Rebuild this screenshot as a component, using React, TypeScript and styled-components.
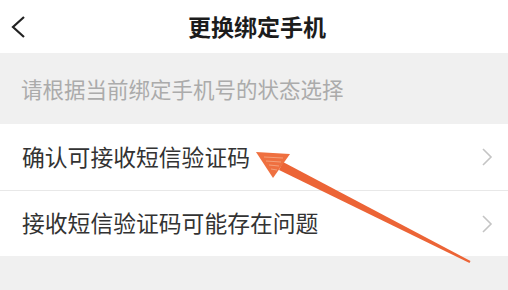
import React from "react";
import styled, { createGlobalStyle } from "styled-components";

const Global = createGlobalStyle`
  html, body { margin: 0; padding: 0; }
  body {
    width: 508px;
    height: 290px;
    overflow: hidden;
    background: #f0f0f0;
    font-family: "Noto Sans CJK SC", "Noto Sans", sans-serif;
  }
`;

const Page = styled.div`
  position: relative;
  width: 508px;
  height: 290px;
  display: flex;
  flex-direction: column;
  background: #f0f0f0;
`;

const Header = styled.header`
  height: 53px;
  background: #ffffff;
  display: grid;
  grid-template-columns: 1fr auto 1fr;
  align-items: center;
`;

const BackButton = styled.div`
  display: flex;
  align-items: center;
  padding-left: 11px;
  height: 100%;
`;

const Title = styled.h1`
  margin: 0;
  font-size: 23px;
  font-weight: 700;
  color: #1c1c1c;
  line-height: 1;
  padding-left: 6px;
`;

const Hint = styled.div`
  height: 71px;
  display: flex;
  align-items: center;
  padding-left: 21px;
  font-size: 21.5px;
  color: #ababab;
  line-height: 1;
`;

const List = styled.div`
  background: #ffffff;
  display: flex;
  flex-direction: column;
`;

const Row = styled.div<{ $h: number; $divider?: boolean }>`
  height: ${(p) => p.$h}px;
  display: flex;
  align-items: center;
  justify-content: space-between;
  padding: 0 15px 0 22px;
  border-bottom: ${(p) => (p.$divider ? "1px solid #e8e8e8" : "none")};
`;

const RowLabel = styled.span`
  font-size: 22.8px;
  color: #333333;
  line-height: 1;
`;

const Overlay = styled.svg`
  position: absolute;
  left: 0;
  top: 0;
  pointer-events: none;
`;

const Chevron = () => (
  <svg width="12" height="18" viewBox="0 0 12 18">
    <polyline points="2,1 10,9 2,17" fill="none" stroke="#c4c4c4" strokeWidth="1.6" />
  </svg>
);

export default function App() {
  return (
    <>
      <Global />
      <Page>
        <Header>
          <BackButton>
            <svg width="16" height="24" viewBox="0 0 16 24">
              <polyline points="13,2 2,12 13,22" fill="none" stroke="#222" strokeWidth="2.2" strokeLinejoin="miter" />
            </svg>
          </BackButton>
          <Title>更换绑定手机</Title>
          <div />
        </Header>
        <Hint>请根据当前绑定手机号的状态选择</Hint>
        <List>
          <Row $h={66} $divider>
            <RowLabel>确认可接收短信验证码</RowLabel>
            <Chevron />
          </Row>
          <Row $h={65}>
            <RowLabel>接收短信验证码可能存在问题</RowLabel>
            <Chevron />
          </Row>
        </List>
        <Overlay width="508" height="290" viewBox="0 0 508 290">
          <polygon points="279,170 283,162 470.5,261 469.5,263" fill="#ec6436" />
          <polygon points="256,152 290,154 273,178" fill="#ef7040" />
          <path d="M264,157 L283,158 M266,161 L281,162 M269,165 L279,166 M271,169 L277,170" stroke="#f4a07a" strokeWidth="1" />
        </Overlay>
      </Page>
    </>
  );
}
